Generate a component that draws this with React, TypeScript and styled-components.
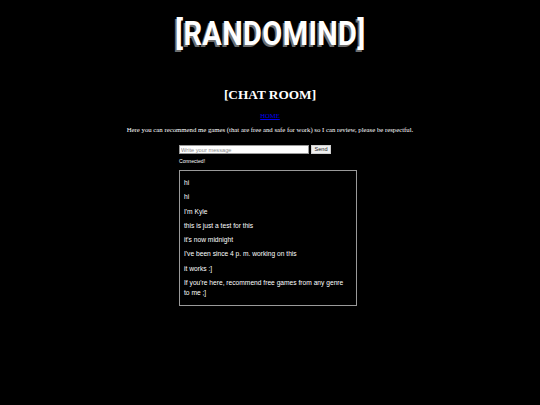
import styled, { createGlobalStyle } from 'styled-components'

const GlobalStyle = createGlobalStyle`
    html, body {
        margin: 0;
        padding: 0;
        background: #000;
    }
`

const Page = styled.div`
    display: flex;
    flex-direction: column;
    align-items: center;
    min-height: 405px;
    background: #000;
    color: #fff;
`

const Logo = styled.div`
    margin-top: 14px;
    font-family: Roboto, "Liberation Sans", sans-serif;
    font-weight: 700;
    font-size: 33px;
    line-height: 40px;
    letter-spacing: 0.4px;
    color: #fff;
    text-shadow: -2px 2px 0 #6e6e6e;
    transform: scaleX(0.88);
`

const Title = styled.h1`
    margin: 33px 0 0;
    font-family: "Liberation Serif", serif;
    font-weight: 700;
    font-size: 13.3px;
    line-height: 15px;
`

const HomeLink = styled.a`
    margin-top: 10px;
    font-family: "Liberation Serif", serif;
    font-size: 6.67px;
    line-height: 8px;
    color: #0000ee;
    text-decoration: underline;
`

const Intro = styled.p`
    margin: 6px 0 0;
    font-family: "Liberation Serif", serif;
    font-size: 6.75px;
    line-height: 8px;
`

const ChatColumn = styled.div`
    width: 182px;
    margin-top: 11px;
    display: flex;
    flex-direction: column;
    align-items: flex-start;
`

const Form = styled.form`
    display: flex;
    gap: 2px;
    align-items: center;
`

const MessageInput = styled.input`
    box-sizing: border-box;
    width: 130px;
    height: 9px;
    padding: 0 1px;
    border: 1px solid #9a9a9a;
    background: #fff;
    font-family: "Liberation Sans", Arial, sans-serif;
    font-size: 5.7px;
    outline: none;

    &::placeholder {
        color: #8a8a8a;
    }
`

const SendButton = styled.button`
    box-sizing: border-box;
    width: 20px;
    height: 9px;
    padding: 0;
    border: 1px solid #cfcfcf;
    background: #efefef;
    color: #222;
    font-family: "Liberation Sans", Arial, sans-serif;
    font-size: 5.6px;
    line-height: 7px;
`

const Status = styled.div`
    margin-top: 4px;
    font-family: "Liberation Sans", Arial, sans-serif;
    font-size: 5.1px;
    line-height: 7px;
`

const MessageBox = styled.div`
    box-sizing: border-box;
    width: 178px;
    margin-top: 5px;
    padding: 7px 8px 3px 4px;
    border: 1px solid #9a9a9a;
`

const Message = styled.p`
    margin: 0 0 4.3px;
    font-family: "Liberation Sans", Arial, sans-serif;
    font-size: 6.67px;
    line-height: 10px;
`

const MESSAGES = [
    'hi',
    'hi',
    "I'm Kyle",
    'this is just a test for this',
    "it's now midnight",
    "I've been since 4 p. m. working on this",
    'it works :]',
    "If you're here, recommend free games from any genre to me ;]",
]

export default function App() {
    return (
        <>
            <GlobalStyle />
            <Page>
                <Logo>[RANDOMIND]</Logo>
                <Title>[CHAT ROOM]</Title>
                <HomeLink href="#">HOME</HomeLink>
                <Intro>
                    Here you can recommend me games (that are free and safe for work) so I can review, please be respectful.
                </Intro>
                <ChatColumn>
                    <Form onSubmit={(e) => e.preventDefault()}>
                        <MessageInput placeholder="Write your message" />
                        <SendButton type="submit">Send</SendButton>
                    </Form>
                    <Status>Connected!</Status>
                    <MessageBox>
                        {MESSAGES.map((text, i) => (
                            <Message key={i}>{text}</Message>
                        ))}
                    </MessageBox>
                </ChatColumn>
            </Page>
        </>
    )
}
